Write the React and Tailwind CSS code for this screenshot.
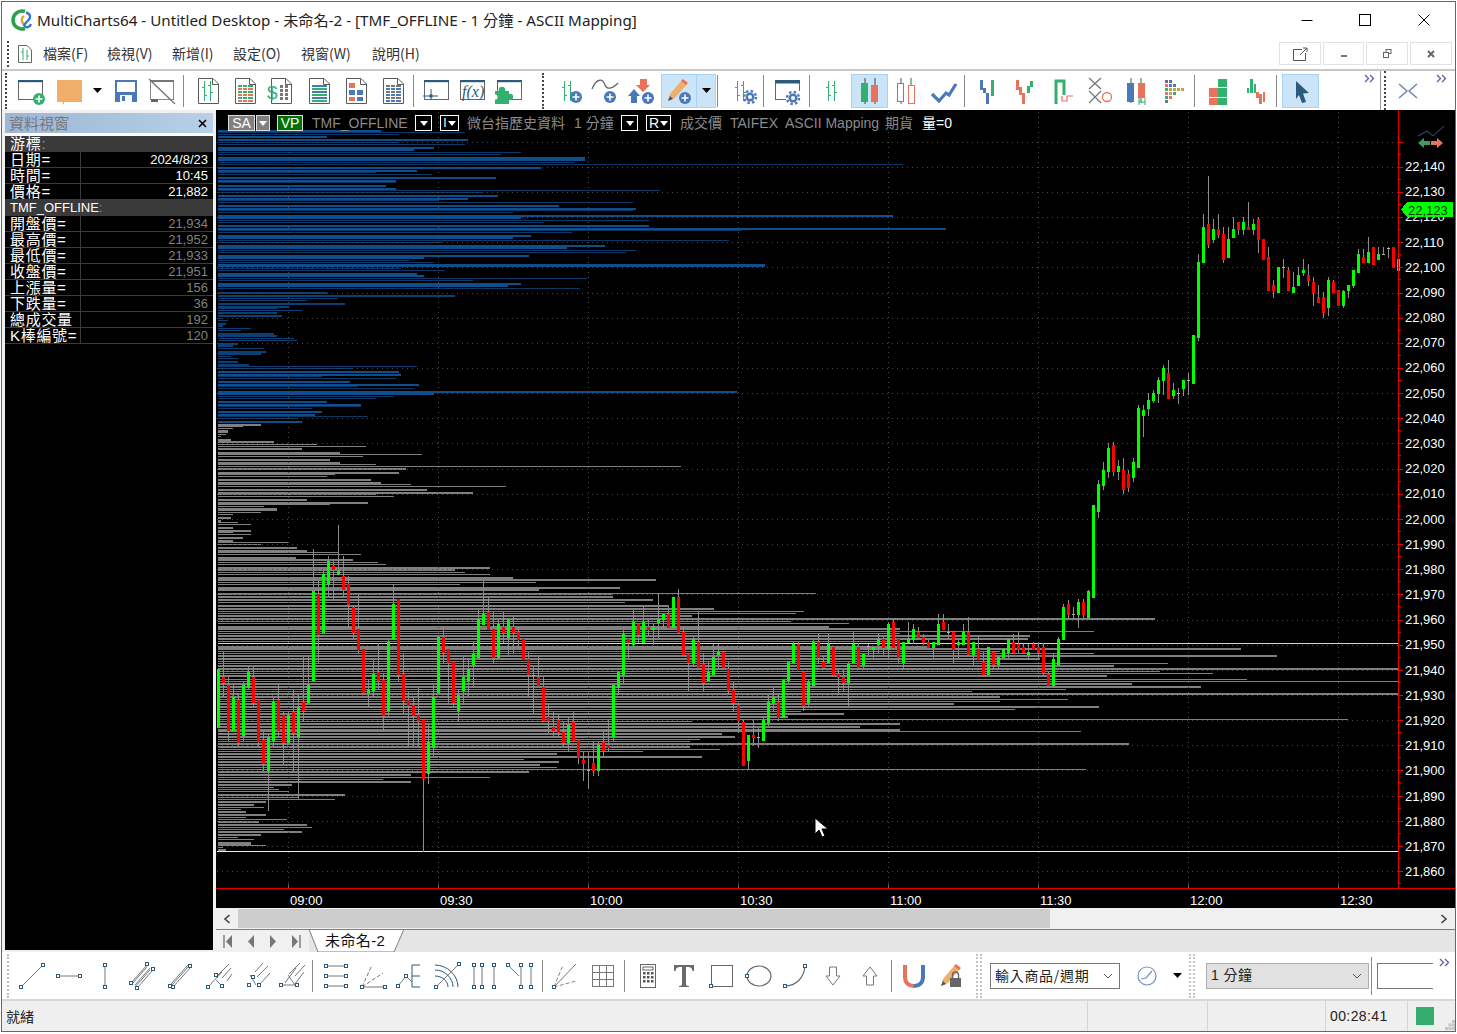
import React from "react";

// ---------- chart data (transcribed from the chart, [x, colour, bodyTop, bodyBottom, wickTop, wickBottom])
const groupA = [
  [7,"g",388,564,388,564],[22,"r",412,430,336,470],[37,"r",436,574,404,604],[52,"g",472,574,428,574],[67,"r",480,610,465,618],
  [82,"g",436,588,426,604],[97,"g",396,444,380,450],[112,"r",412,490,380,500],[127,"r",480,606,480,618],[142,"r",600,672,576,692],
  [157,"g",592,694,584,812],[172,"g",486,604,474,618],[187,"r",480,574,434,590],[202,"r",526,610,516,676],[217,"g",526,610,516,610],
  [232,"r",516,580,450,692],[247,"g",502,594,466,778],[262,"r",486,514,350,544],[277,"g",436,490,350,490],[292,"g",152,424,28,424],
  [307,"r",162,286,124,370],[322,"g",102,280,86,280],[337,"g",64,136,48,170],[352,"r",78,90,64,176],[367,"g",94,106,-45,106],
  [382,"r",108,150,48,174],[397,"r",132,196,108,264],[412,"r",202,280,198,298],[427,"r",268,330,162,338],[442,"r",328,460,328,460],
  [457,"g",450,460,420,502],[472,"g",402,454,360,470],[487,"r",396,424,310,450],[502,"r",420,528,400,574],[517,"g",306,514,300,528],
  [532,"g",192,300,132,300],[547,"r",178,406,178,424],[562,"r",402,484,342,520],[577,"r",480,498,456,618],[592,"r",496,528,470,618],
  [607,"r",526,544,444,618],[622,"r",540,718,540,935],[637,"g",606,702,556,732],[652,"g",472,624,436,648],[667,"g",292,460,292,460],
  [682,"r",292,340,262,370],[697,"r",328,370,328,490],[712,"r",366,490,366,502],[727,"g",466,514,450,542],[742,"g",412,454,350,490],
  [757,"g",388,424,356,468],[772,"g",342,376,306,440],[787,"g",238,354,208,354],[802,"g",222,256,124,256],[817,"r",216,270,170,270],
  [832,"r",268,354,216,370],[847,"g",252,354,236,354],[862,"r",262,280,216,310],[877,"g",238,294,238,346],[892,"r",262,280,232,340],
  [907,"r",276,300,262,328],[922,"r",298,360,298,360],[937,"r",358,406,336,470],[952,"d",405,405,380,520],[967,"r",412,438,350,438],
  [982,"r",442,544,412,544],[997,"r",532,544,488,580],[1012,"r",562,574,516,590],[1027,"r",540,580,526,592],[1042,"r",576,610,546,618],
  [1057,"g",556,610,534,634],[1072,"r",546,604,516,604],[1087,"r",600,654,600,672],[1102,"r",660,672,636,724],[1117,"d",690,690,636,748],
  [1132,"r",670,694,604,708],[1147,"g",616,694,606,708],[1162,"r",606,634,570,650],[1177,"r",616,624,540,634],
];
const groupB = [
  [10,"g",316,472,316,484],[25,"g",276,324,276,346],[40,"g",162,286,150,310],[55,"r",178,190,178,234],[70,"g",126,196,90,204],
  [85,"r",132,166,132,190],[100,"g",126,190,82,190],[115,"r",142,150,120,166],[130,"g",142,150,132,196],[145,"g",118,130,42,174],
  [160,"g",102,120,102,148],[175,"r",102,144,82,144],[190,"g",52,144,52,144],[205,"r",52,160,28,160],[220,"r",156,226,140,226],
  [235,"r",222,250,222,334],[250,"g",178,250,172,258],[265,"r",186,264,96,264],[280,"r",252,310,222,334],[295,"g",276,304,246,304],
  [310,"g",232,286,192,286],[325,"g",216,226,192,264],[340,"r",216,264,216,264],[355,"r",268,334,246,346],[370,"r",330,370,306,394],
  [385,"r",376,424,376,460],[400,"r",426,558,420,558],[415,"g",466,544,466,568],[430,"r",466,474,420,498],[445,"d",472,472,444,504],
  [460,"g",420,484,412,484],[475,"g",366,430,346,438],[490,"g",352,370,322,394],[505,"r",366,414,346,422],[520,"g",300,414,300,414],
  [535,"g",246,304,246,310],[550,"g",192,250,186,250],[565,"r",192,270,186,270],[580,"r",276,378,276,394],[595,"g",306,370,300,384],
  [610,"g",186,318,180,318],[625,"r",186,234,162,250],[640,"r",246,264,232,270],[655,"g",192,250,162,250],[670,"r",202,286,202,286],
  [685,"r",282,294,268,346],[700,"r",292,310,270,334],
];
const groupC = [
  [25,"g",222,280,216,348],[40,"g",162,220,126,220],[55,"r",172,234,160,234],[70,"g",192,226,192,238],[85,"d",168,168,162,196],
  [100,"g",171,180,171,204],[115,"g",148,166,132,192],[130,"r",148,174,142,196],[145,"g",102,180,96,208],[160,"r",96,174,88,174],
  [175,"r",148,204,148,220],[190,"g",156,220,156,238],[205,"g",148,160,96,160],[220,"g",118,150,102,162],[235,"r",126,144,112,144],
  [250,"r",142,160,132,166],[265,"r",156,174,150,174],[280,"g",156,174,156,204],[295,"g",102,166,72,166],[310,"r",96,120,72,120],
  [325,"d",126,126,102,144],[340,"r",126,180,126,220],[355,"g",156,166,150,204],[370,"g",126,166,102,166],[385,"r",126,196,82,196],
  [400,"g",156,196,156,226],[415,"r",178,210,142,210],[430,"r",216,256,186,256],[445,"g",172,256,172,256],[460,"r",186,226,186,234],
  [475,"g",202,226,202,238],[490,"g",178,204,178,204],[505,"g",148,190,148,204],[520,"r",156,190,132,190],[535,"r",162,180,126,190],
  [550,"r",172,190,162,190],[565,"g",186,196,162,210],[580,"r",162,180,156,180],[595,"r",172,190,156,204],[610,"r",172,250,160,256],
  [625,"r",252,288,246,288],[640,"g",208,288,192,294],[655,"g",148,226,142,226],[670,"g",52,150,42,150],[685,"r",42,76,30,88],
  [700,"d",73,73,52,90],[715,"g",36,76,26,114],[730,"r",36,76,28,88],[745,"g",3,84,0,84],
];
const groupD = [
  [1093.3,"g",505,598,505,598],[1098.3,"g",484,512,480,518],[1103.3,"g",470,486,462,490],[1108.3,"g",448,472,443,478],
  [1113.3,"r",445,472,442,476],[1118.3,"g",466,472,460,480],[1123.3,"r",470,490,458,494],[1128.3,"r",474,488,470,492],[1133.3,"g",462,478,458,482],
];
const groupE = [
  [265,"g",864,1044,856,1044],[280,"g",870,888,856,950],[295,"g",840,868,820,888],[310,"g",820,844,810,850],[325,"g",780,822,770,850],
  [340,"g",744,784,736,826],[355,"r",760,838,720,838],[370,"g",810,828,790,836],[385,"d",820,820,805,852],[400,"g",780,808,780,828],
  [415,"d",780,780,760,824],[430,"g",645,792,645,792],[445,"g",426,654,402,662],[460,"g",320,430,282,430],[475,"r",312,376,168,384],
  [490,"g",326,360,298,368],[505,"r",326,346,282,354],[520,"r",342,420,320,428],[535,"g",356,414,320,414],[550,"g",326,354,292,354],
  [565,"r",306,330,306,346],[580,"g",306,330,292,346],[595,"r",320,330,246,330],[610,"g",312,330,296,346],[625,"r",298,360,292,400],
  [640,"r",356,420,356,420],[655,"r",410,514,380,514],[670,"r",494,514,480,534],[685,"g",440,518,440,518],[700,"d",442,442,418,474],
  [715,"r",450,514,440,514],[730,"g",500,518,456,518],[745,"g",464,498,440,498],[760,"g",450,460,418,468],[775,"r",464,484,432,498],
  [790,"r",486,520,470,558],[805,"r",530,550,494,550],[820,"r",530,580,516,594],[835,"g",480,564,472,588],[850,"r",486,518,480,518],
  [865,"r",510,558,510,558],[880,"g",514,558,510,564],[895,"g",494,514,494,534],[910,"g",450,498,450,504],[925,"g",402,460,386,460],
  [940,"r",410,430,386,430],[955,"g",396,430,350,430],[970,"r",382,436,382,436],[985,"g",402,420,380,420],[1000,"d",402,402,380,404],
  [1015,"d",385,385,380,414],[1030,"r",382,444,382,444],[1045,"g",417,452,417,452],
];

const toScreen = (list, bx, by, s) =>
  list.map(([x, c, t, b, wt, wb]) => ({
    x: Math.floor(bx + x / s),
    c,
    t: Math.round(by + t / s),
    b: Math.round(by + b / s),
    wt: Math.round(by + wt / s),
    wb: Math.round(by + wb / s),
  }));

const candles = [
  ...toScreen(groupA, 216, 540, 3),
  ...toScreen(groupB, 610, 580, 3),
  ...toScreen(groupC, 840, 590, 3),
  ...toScreen(groupD, 0, 0, 1),
  ...toScreen(groupE, 1050, 120, 3),
];

// volume profile rows: [y, width] in zoom units plus height
const blueRows = [
  [3,495,2],[9,747,1],[15,549,1],[23,333,2],[32,756,2],[40,549,1],[46,747,1],[54,654,2],[62,594,2],[70,915,1],[76,855,1],[84,1107,2],[92,1107,2],[99,1074,1],
  [106,2061,1],[114,975,2],[123,603,2],[130,480,1],[136,648,1],[144,840,2],[153,540,2],[160,540,1],[168,510,2],[177,540,2],[184,1332,1],[190,800,1],[198,846,2],
  [207,756,2],[213,669,1],[220,1250,1],[228,1029,2],[237,1260,2],[244,1250,1],[250,891,1],[258,2031,2],[266,915,2],[274,1300,1],[280,984,1],[288,1300,2],
  [297,2190,2],[303,1578,1],[310,1068,1],[318,945,2],[326,891,2],[334,1540,1],[340,677,1],[348,1167,2],[356,1053,2],[364,1260,1],[370,1230,1],[378,939,2],
  [386,624,2],[394,579,1],[400,654,1],[409,1647,3],[418,555,1],[424,687,1],[432,603,2],[440,624,2],[448,1113,1],[454,771,1],[462,915,2],[470,876,2],[478,1092,1],
  [491,333,2],[500,717,2],[508,366,1],[514,273,1],[522,387,2],[531,219,2],[538,183,1],[544,258,1],[551,183,2],[560,198,2],[568,15,1],[574,36,1],[582,30,2],[590,21,2],
  [598,105,1],[604,75,1],[612,174,2],[620,183,2],[628,234,1],[634,243,1],[642,66,2],[650,51,2],[658,144,1],[666,150,2],[674,135,2],[682,45,1],[688,66,1],[696,66,2],
  [705,99,2],[712,603,1],[717,411,1],[726,549,2],[735,555,2],[742,318,1],[748,540,1],[756,402,2],[765,609,2],[772,426,1],[778,594,1],[786,1563,2],[794,654,2],
  [802,534,1],[808,480,1],[816,333,2],[825,435,2],[832,435,1],[838,288,1],[846,318,2],[855,297,2],[862,456,1],[868,243,1],[876,258,2],
];
const grayTop = [
  [0,135,2],[7,81,1],[13,51,1],[22,36,3],[31,30,1],[37,15,1],[45,45,2],[53,174,2],[61,303,1],[67,450,1],[74,258,2],[84,372,2],[91,618,1],[97,441,1],[105,342,2],
  [114,372,2],[121,480,1],[127,1395,1],[134,570,2],[144,549,2],[151,357,1],[157,333,1],[165,465,2],[174,495,2],[181,585,1],[187,870,1],[195,633,2],[204,771,2],
  [211,480,1],[217,534,1],[225,273,2],[234,456,2],[241,342,1],[247,144,1],[256,183,3],[265,135,1],[271,51,1],[279,45,2],[288,15,2],[295,66,1],[301,105,1],[309,51,2],
  [318,105,2],[325,51,1],[331,105,1],[339,81,2],[348,51,2],[355,219,1],[361,135,1],[369,243,2],
];
const grayMid = [
  [33,273,2],[40,366,1],[46,435,1],[54,240,2],[62,411,2],[70,486,1],[76,510,1],[84,822,2],[92,717,2],[99,747,1],[106,822,1],[114,891,2],[122,1320,2],[130,960,1],
  [136,732,1],[144,1212,2],[152,969,2],[161,1800,1],[166,1190,1],[172,1191,2],[183,1068,1],[190,1113,1],
];
// rows in screen px: [y, height, right edge]
const grayAbs = [
  [599,2,653],[602,1,625],[605,2,669],[608,2,714],[611,1,804],[613,1,796],[615,2,692],[618,2,1155],[621,1,791],[623,1,849],[626,2,829],[628,2,900],[631,1,1094],[633,1,900],
  [635,2,1030],[638,2,1028],[641,1,900],[646,2,930],[648,2,1241],[651,1,1000],[653,1,1094],[655,2,1277],[658,2,1040],[661,1,1000],[663,1,1168],[665,2,1114],[668,2,1398],
  [671,1,1160],[673,1,1213],[675,2,1107],[679,1,1247],[681,1,1398],[683,2,1132],[686,2,1201],[689,1,1066],[691,1,972],[693,2,1398],[696,2,1000],[699,1,1068],[701,1,1000],
  [703,2,954],[706,2,1099],[709,1,1015],[711,1,801],[713,2,844],[716,2,788],[719,1,1348],[721,1,692],[723,2,900],[726,2,860],[729,2,900],[731,1,1081],[733,2,722],[736,2,735],
  [739,1,700],[741,1,690],[743,2,1129],[746,2,690],[749,1,720],[751,1,643],[753,2,557],[756,2,702],[759,1,524],[761,2,559],[764,2,540],[767,1,557],[769,1,1086],
  [771,2,529],[774,2,411],[777,1,490],[779,1,383],[781,2,411],[784,2,292],[787,1,274],[789,1,279],[791,1,289],[794,2,345],[797,1,298],[799,1,335],[801,2,266],[804,2,254],
  [807,1,264],[809,1,241],[811,2,246],[814,2,266],[817,1,246],[819,1,287],[821,2,259],[824,2,307],[827,1,312],[829,1,284],[831,2,302],[834,2,261],[837,1,238],[839,1,254],
  [842,3,251],[845,1,266],[847,1,223],[849,2,226],
];

const prices = [];
for (let p = 22140; p >= 21860; p -= 10) prices.push(p);
const gridY = [141.7];
prices.forEach((_, i) => gridY.push(141.7 + 25.15 * (i + 1)));
const gridX = [288, 438, 588, 738, 888, 1038, 1188, 1338];
const times = ["09:00", "09:30", "10:00", "10:30", "11:00", "11:30", "12:00", "12:30"];

function Chart() {
  return (
    <svg width="1239" height="798" viewBox="216 110 1239 798" shapeRendering="crispEdges" className="block bg-black">
      {blueRows.map(([z, w, h], i) => (
        <rect key={i} x="218" y={Math.floor(130 + z / 3 - h / 2)} width={w / 3 - 2} height={h} fill={z > 480 && z < 720 ? "#0d3f73" : h > 1 ? "#104e8b" : "#0b3866"} />
      ))}
      {grayTop.map(([z, w, h], i) => (
        <rect key={i} x="218" y={Math.floor(425 + z / 3 - h / 2)} width={w / 3 - 2} height={h} fill="#808080" />
      ))}
      {grayMid.map(([z, w, h], i) => (
        <rect key={i} x="218" y={Math.floor(540 + z / 3 - h / 2)} width={w / 3 - 2} height={h} fill="#808080" />
      ))}
      {grayAbs.map(([y, h, x2], i) => (
        <rect key={i} x="218" y={y} width={x2 - 218} height={h} fill="#808080" />
      ))}
      <rect x="218" y="643" width="1180" height="1" fill="#f0c8c8" />
      <rect x="217" y="851" width="1181" height="1" fill="#f5f5b8" />

      {gridY.map((y) => (
        <line key={y} x1="217" x2="1398" y1={Math.round(y) + 0.5} y2={Math.round(y) + 0.5} stroke="#484848" strokeDasharray="1 4" />
      ))}
      {gridX.map((x) => (
        <line key={x} x1={x + 0.5} x2={x + 0.5} y1="112" y2="884" stroke="#484848" strokeDasharray="1 4" />
      ))}

      {candles.map((k, i) => (
        <rect key={i} x={k.x} y={k.wt} width="1" height={k.wb - k.wt} fill="#8c8c8c" />
      ))}
      {candles.map((k, i) =>
        k.c === "d" ? (
          <rect key={i} x={k.x - 1} y={k.t} width="3" height="1" fill="#b0b0b0" />
        ) : (
          <rect key={i} x={k.x - 1} y={k.t} width="3" height={k.b - k.t} fill={k.c === "g" ? "#00ff00" : "#ff0000"} />
        )
      )}

      {/* axis */}
      <rect x="1398" y="110" width="1" height="778" fill="#e60000" />
      <rect x="216" y="888" width="1239" height="1" fill="#e60000" />
      {gridY.map((y) => (
        <g key={y}>
          <rect x="1399" y={Math.round(y)} width="4" height="1" fill="#e60000" />
          <rect x="1399" y={Math.round(y) + 12} width="2" height="1" fill="#e60000" />
        </g>
      ))}
      {gridX.map((x) => (
        <rect key={x} x={x} y="884" width="1" height="4" fill="#666" />
      ))}
      <rect x="1398" y="884" width="1" height="4" fill="#e60000" />

      <g fontSize="13" fill="#ffffff" shapeRendering="auto">
        {prices.map((p, i) => (
          <text key={p} x="1405" y={171 + 25.18 * i}>{p.toLocaleString("en-US")}</text>
        ))}
        {times.map((t, i) => (
          <text key={t} x={gridX[i] + 2} y="905">{t}</text>
        ))}
      </g>

      {/* last price flag */}
      <polygon points="1401,209.5 1407,202 1453,202 1453,217 1407,217" fill="#00ff00" />
      <text x="1408" y="215" fontSize="13" fill="#0a3a0a" shapeRendering="auto">22,123</text>

      {/* top right trend badge */}
      <g shapeRendering="auto">
        <path d="M1418 136 L1427 131 L1433 136 L1444 126" fill="none" stroke="#3d5a80" strokeWidth="1" />
        <path d="M1418 143 L1424 138 L1424 141 L1430 141 L1430 145 L1424 145 L1424 148 Z" fill="#3c9d62" />
        <path d="M1443 143 L1437 138 L1437 141 L1431 141 L1431 145 L1437 145 L1437 148 Z" fill="#e8735a" />
      </g>

      {/* mouse pointer */}
      <path d="M815 818 L815 834 L819 830 L822 837 L825 836 L822 829 L828 829 Z" fill="#fff" stroke="#000" strokeWidth="1" shapeRendering="auto" />
    </svg>
  );
}

// ---------- icons
const NAVY = "#2b5a7a";
const GREEN = "#31b06e";
const SALMON = "#e8735a";
const BLUE = "#4a78b8";

function Ico({ children }) {
  return (
    <svg width="32" height="32" viewBox="0 0 32 32" className="shrink-0 overflow-visible">
      {children}
    </svg>
  );
}

const Plus = ({ cx = 24, cy = 24, r = 6, fill = GREEN }) => (
  <g>
    <circle cx={cx} cy={cy} r={r} fill={fill} />
    <path d={`M${cx - 3.5} ${cy}H${cx + 3.5}M${cx} ${cy - 3.5}V${cy + 3.5}`} stroke="#fff" strokeWidth="1.6" />
  </g>
);

const Gear = ({ cx = 22, cy = 23, r = 6 }) => (
  <g>
    <circle cx={cx} cy={cy} r={r - 1.5} fill={BLUE} />
    <circle cx={cx} cy={cy} r={r} fill="none" stroke={BLUE} strokeWidth="2.4" strokeDasharray="2.4 2.3" />
    <circle cx={cx} cy={cy} r="2" fill="#fff" />
  </g>
);

const Win = ({ color = "#666", top = NAVY }) => (
  <g fill="none">
    <rect x="3.5" y="5.5" width="24" height="19" stroke={color} />
    <rect x="3" y="5" width="25" height="2.2" fill={top} />
  </g>
);

const Doc = ({ children }) => (
  <g>
    <path d="M6.5 3.5H21L26.5 9V28.5H6.5Z" fill="#fff" stroke="#5a5a5a" />
    <path d="M20.5 3.5V9.5H26.5" fill="none" stroke="#5a5a5a" />
    {children}
  </g>
);

const MiniBars = ({ x = 10 }) => (
  <g fill={GREEN}>
    <rect x={x} y="6" width="1" height="20" />
    <rect x={x - 2} y="12" width="2" height="1" />
    <rect x={x + 1} y="20" width="2" height="1" />
    <rect x={x + 6} y="6" width="1" height="20" />
    <rect x={x + 4} y="10" width="2" height="1" />
    <rect x={x + 7} y="17" width="2" height="1" />
  </g>
);

const TableRows = ({ c1, c2 }) => (
  <g>
    {[10, 13, 16, 19, 22, 25].map((y, i) => (
      <g key={y}>
        <rect x="9" y={y} width="4" height="2" fill={i % 2 ? c2 : c1} />
        <rect x="14" y={y} width="4" height="2" fill={i % 2 ? c2 : c1} />
        <rect x="19" y={y} width="5" height="2" fill={i % 2 ? c2 : c1} />
      </g>
    ))}
  </g>
);

const Node = ({ x, y, c = NAVY }) => <rect x={x - 1.5} y={y - 1.5} width="3" height="3" fill="#fff" stroke={c} strokeWidth="1" />;
const L = ({ d, c = "#777", w = 1 }) => <path d={d} fill="none" stroke={c} strokeWidth={w} />;

const Pencil = ({ x = 0, y = 0 }) => (
  <g transform={`translate(${x} ${y})`}>
    <path d="M5 26 L7 19 L19 5 L24 9 L12 23 Z" fill="#efae6a" />
    <path d="M18 6 L20 4 L25 8 L23 10 Z" fill={SALMON} />
    <path d="M5 26 L7 21 L10 24 Z" fill="#555" />
  </g>
);

const Chevrons = () => (
  <svg width="11" height="9" viewBox="0 0 11 9" className="shrink-0">
    <path d="M1 1 L4.5 4.5 L1 8 M6 1 L9.5 4.5 L6 8" fill="none" stroke="#5c5ca8" strokeWidth="1.3" />
  </svg>
);

const DropArrow = () => (
  <svg width="9" height="5" viewBox="0 0 9 5" className="shrink-0"><path d="M0 0H9L4.5 5Z" fill="#000" /></svg>
);

const ComboArrow = () => (
  <svg width="10" height="6" viewBox="0 0 10 6" className="shrink-0"><path d="M1 1L5 5L9 1" fill="none" stroke="#555" /></svg>
);

function Slot({ c, on, children }) {
  return (
    <div className={`flex items-center justify-center shrink-0 ${c} ${on ? "h-[34px] bg-[#cce4f7] border border-[#a5d2f5]" : "h-full"}`}>
      {children}
    </div>
  );
}

const Sep = ({ c = "" }) => <div className={`w-px h-[32px] bg-[#8a8a8a] shrink-0 ${c}`} />;

function TitleBar() {
  return (
    <div className="flex items-center h-[36px] bg-white shrink-0">
      <svg width="22" height="22" viewBox="0 0 22 22" className="ml-[9px] shrink-0">
        <path d="M14 2.5 A9 9 0 1 0 14 19.5" fill="none" stroke="#2e9e4f" strokeWidth="3.6" />
        <path d="M13 7 A4.6 4.6 0 0 0 13 15" fill="none" stroke="#e8a020" strokeWidth="2.2" />
        <path d="M15 3.5 C20 5 20 9 17 11.5 L13 16 C15 20 19 18 20 15" fill="none" stroke="#3a78c8" strokeWidth="2.4" />
      </svg>
      <div className="ml-[4px] text-[15.2px] text-[#222] whitespace-nowrap [font-family:'Noto_Sans','Noto_Sans_CJK_TC',sans-serif]">
        MultiCharts64 - Untitled Desktop - 未命名-2 - [TMF_OFFLINE - 1 分鐘 - ASCII Mapping]
      </div>
      <div className="ml-auto flex items-center h-full">
        <svg width="12" height="12" viewBox="0 0 12 12" className="mr-[46px]"><path d="M0.5 6.5H11.5" stroke="#000" /></svg>
        <svg width="12" height="12" viewBox="0 0 12 12" className="mr-[47px]"><rect x="0.5" y="0.5" width="11" height="11" fill="none" stroke="#000" /></svg>
        <svg width="12" height="12" viewBox="0 0 12 12" className="mr-[25px]"><path d="M0.5 0.5L11.5 11.5M11.5 0.5L0.5 11.5" stroke="#000" /></svg>
      </div>
    </div>
  );
}

function MenuBar() {
  return (
    <div className="flex items-center h-[31px] bg-white shrink-0 pl-[5px]">
      <div className="w-0 h-[26px] border-l-2 border-dotted border-[#444] shrink-0" />
      <svg width="16" height="18" viewBox="0 0 16 18" className="ml-[8px] shrink-0">
        <path d="M1.5 .5H10L14.5 5V17.5H1.5Z" fill="#fff" stroke="#666" />
        <path d="M6 3V15M10 5V15" stroke={GREEN} />
        <path d="M4 7H6M10 11H12" stroke={GREEN} />
      </svg>
      <div className="flex ml-[10px] text-[14px] text-[#333] whitespace-nowrap [font-family:'Noto_Sans_CJK_TC',sans-serif]">
        <span className="w-[64px]">檔案(F)</span>
        <span className="w-[65px]">檢視(V)</span>
        <span className="w-[61px]">新增(I)</span>
        <span className="w-[68px]">設定(O)</span>
        <span className="w-[71px]">視窗(W)</span>
        <span className="w-[50px]">說明(H)</span>
      </div>
      <div className="ml-auto flex gap-[2px] pr-[3px]">
        <div className="w-[42px] h-[23px] border border-[#e2e2e2] flex items-center justify-center">
          <svg width="16" height="14" viewBox="0 0 16 14"><path d="M10 2.5H1.5V13.5H13.5V6" fill="none" stroke="#555" /><path d="M8 8L15 1M11 1H15V5" fill="none" stroke="#555" /></svg>
        </div>
        <div className="w-[41px] h-[23px] border border-[#e2e2e2] flex items-center justify-center">
          <div className="w-[6px] h-[2px] bg-[#777] mt-[5px]" />
        </div>
        <div className="w-[42px] h-[23px] border border-[#e2e2e2] flex items-center justify-center">
          <svg width="9" height="9" viewBox="0 0 9 9"><rect x="3" y="0.5" width="5" height="4" fill="#fff" stroke="#666" /><rect x="0.5" y="3.5" width="5" height="5" fill="#fff" stroke="#666" /></svg>
        </div>
        <div className="w-[42px] h-[23px] border border-[#e2e2e2] flex items-center justify-center">
          <svg width="8" height="8" viewBox="0 0 8 8"><path d="M1 1L7 7M7 1L1 7" stroke="#666" strokeWidth="2" /></svg>
        </div>
      </div>
    </div>
  );
}

function TopToolbar() {
  return (
    <div className="flex items-center h-[39px] bg-white shrink-0 pl-[3px]">
      <div className="w-0 h-[36px] border-l-2 border-dotted border-[#444] shrink-0" />
      <div className="w-[2px] shrink-0" />
      <Slot c="w-[44px]"><Ico><Win /><Plus /></Ico></Slot>
      <Slot c="w-[34px]"><Ico><path d="M3 5H28V27H10V30L8 27H3Z" fill="#efae6a" /></Ico></Slot>
      <Slot c="w-[20px]"><DropArrow /></Slot>
      <Slot c="w-[38px]"><Ico>
        <path d="M5 5H27V27H5Z" fill={BLUE} /><rect x="7" y="7" width="18" height="10" fill="#fff" /><rect x="10" y="20" width="12" height="7" fill="#fff" /><rect x="12" y="21" width="3" height="5" fill={BLUE} />
      </Ico></Slot>
      <Slot c="w-[34px]"><Ico>
        <rect x="4.5" y="5.5" width="23" height="19" fill="none" stroke="#888" /><rect x="4" y="5" width="24" height="2" fill="#777" />
        <path d="M3 4L29 29" stroke="#777" strokeWidth="1.4" /><path d="M5 24H12V27H5Z" fill="#666" />
      </Ico></Slot>
      <Slot c="w-[8px]"><Sep /></Slot>
      <Slot c="w-[42px]"><Ico><Doc><MiniBars x={12} /></Doc></Ico></Slot>
      <Slot c="w-[32px]"><Ico><Doc><TableRows c1={GREEN} c2={SALMON} /></Doc></Ico></Slot>
      <Slot c="w-[40px]"><Ico>
        <Doc><g fill="#777">{[10, 14, 18, 22].map((y) => <g key={y}><rect x="15" y={y} width="3" height="3" /><rect x="20" y={y} width="3" height="3" /></g>)}</g></Doc>
        <text x="2" y="24" fontSize="19" fill={GREEN} fontFamily="Liberation Sans">$</text>
      </Ico></Slot>
      <Slot c="w-[36px]"><Ico><Doc>{[10, 13, 16, 19, 22, 25].map((y, i) => <rect key={y} x="9" y={y} width="15" height="2" fill={i % 2 ? GREEN : BLUE} />)}</Doc></Ico></Slot>
      <Slot c="w-[38px]"><Ico><Doc>
        <rect x="9" y="8" width="6" height="5" fill={SALMON} /><rect x="9" y="15" width="6" height="5" fill={BLUE} /><rect x="17" y="15" width="6" height="5" fill={BLUE} />
        <rect x="9" y="22" width="6" height="4" fill={SALMON} /><rect x="17" y="22" width="6" height="4" fill={BLUE} />
      </Doc></Ico></Slot>
      <Slot c="w-[36px]"><Ico><Doc><TableRows c1="#777" c2={BLUE} /></Doc></Ico></Slot>
      <Slot c="w-[4px]"><Sep /></Slot>
      <Slot c="w-[44px]"><Ico><Win /><path d="M2 21H17M10 14V25" stroke={NAVY} /><rect x="8.5" y="19.5" width="3" height="3" fill={NAVY} /></Ico></Slot>
      <Slot c="w-[28px]"><Ico><Win /><text x="5" y="22" fontSize="16" fontStyle="italic" fill={NAVY} fontFamily="Liberation Serif">f(x)</text></Ico></Slot>
      <Slot c="w-[46px]"><Ico><Win />
        <g fill={GREEN}><rect x="1" y="16" width="14" height="13" /><circle cx="8" cy="15" r="3.2" /><circle cx="16" cy="22" r="3.2" /></g>
        <circle cx="1" cy="22" r="2.6" fill="#fff" />
      </Ico></Slot>
      <Slot c="w-[20px]"><div className="w-0 h-[36px] border-l-2 border-dotted border-[#444] -ml-[1px]" /></Slot>
      <Slot c="w-[34px]"><Ico><MiniBars x={10} /><Plus fill={BLUE} cx={22} cy={22} /></Ico></Slot>
      <Slot c="w-[36px]"><Ico><path d="M3 14 C8 2 14 4 16 10 C18 15 23 14 29 8" fill="none" stroke="#666" strokeWidth="1.3" /><Plus fill={BLUE} cx={21} cy={22} /></Ico></Slot>
      <Slot c="w-[36px]"><Ico><path d="M15 4H22V10H25L18 17L11 10H15Z" fill={SALMON} /><path d="M9 14L15 21H12V28H6V21H3Z" fill={BLUE} /><Plus fill={BLUE} cx={23} cy={23} /></Ico></Slot>
      <div className="w-[2px] shrink-0" />
      <Slot c="w-[36px]" on><Ico><Pencil /><Plus fill={BLUE} cx={22} cy={23} /></Ico></Slot>
      <Slot c="w-[20px] -ml-px" on><DropArrow /></Slot>
      <Slot c="w-[11px] justify-end"><Sep c="mr-[9px]" /></Slot>
      <Slot c="w-[36px]"><Ico><MiniBars x={8} /><Gear cx={21} cy={22} /></Ico></Slot>
      <Slot c="w-[4px] justify-start"><Sep /></Slot>
      <Slot c="w-[42px]"><Ico><Win /><rect x="3" y="5" width="25" height="3.5" fill={NAVY} /><rect x="14" y="16" width="15" height="14" fill="#fff" /><Gear cx={21} cy={23} /></Ico></Slot>
      <Slot c="w-[4px] justify-start"><Sep /></Slot>
      <Slot c="w-[36px]"><Ico><MiniBars x={13} /></Ico></Slot>
      <div className="w-[2px] shrink-0" />
      <Slot c="w-[37px]" on><Ico>
        <path d="M11 3V29M21 3V29" stroke="#444" /><rect x="7" y="8" width="7" height="19" fill={GREEN} /><rect x="17" y="10" width="7" height="17" fill={SALMON} />
      </Ico></Slot>
      <Slot c="w-[36px]"><Ico>
        <path d="M11 3V29M21 3V29" stroke="#555" /><rect x="7.5" y="8.5" width="6" height="18" fill="#fff" stroke={GREEN} /><rect x="18.5" y="10.5" width="6" height="18" fill="#fff" stroke={SALMON} />
      </Ico></Slot>
      <Slot c="w-[40px]"><Ico><path d="M4 19 L11 26 L18 18 L21 20 L28 9" fill="none" stroke={BLUE} strokeWidth="3.2" /></Ico></Slot>
      <Slot c="w-[4px] justify-start"><Sep /></Slot>
      <Slot c="w-[40px]"><Ico>
        <rect x="8" y="5" width="3" height="10" fill={BLUE} /><rect x="11" y="13" width="3" height="5" fill={BLUE} /><rect x="14" y="18" width="3" height="11" fill={BLUE} /><rect x="19" y="5" width="3" height="16" fill={GREEN} />
      </Ico></Slot>
      <Slot c="w-[32px]"><Ico>
        <rect x="8" y="5" width="3" height="10" fill={SALMON} /><rect x="11" y="12" width="3" height="8" fill={SALMON} /><rect x="14" y="18" width="3" height="11" fill={SALMON} /><rect x="19" y="11" width="3" height="7" fill={GREEN} /><rect x="22" y="6" width="3" height="6" fill={GREEN} />
      </Ico></Slot>
      <Slot c="w-[48px]"><Ico>
        <path d="M8 29V6H16V20" fill="none" stroke={GREEN} strokeWidth="3" /><path d="M14 21V26H19V21H25" fill="none" stroke={SALMON} strokeWidth="1.2" />
      </Ico></Slot>
      <Slot c="w-[24px]"><Ico>
        <path d="M5 3L17 14M17 3L5 14M5 16L17 28M17 16L5 28" stroke="#777" strokeWidth="1.3" /><circle cx="23" cy="22" r="4.5" fill="none" stroke={SALMON} strokeWidth="1.3" />
      </Ico></Slot>
      <Slot c="w-[48px]"><Ico>
        <path d="M11 3V28M21 3V28" stroke="#555" /><rect x="7" y="8" width="7" height="19" fill={BLUE} /><rect x="18" y="8" width="7" height="15" fill={SALMON} />
        <path d="M19 23V30M25 23V30M19 27H25" stroke={GREEN} />
      </Ico></Slot>
      <Slot c="w-[26px]"><Ico>
        {[
          [8, 5, "#6a6a9a"], [12, 5, "#6a6a9a"], [8, 9, SALMON], [12, 9, BLUE], [16, 9, BLUE], [8, 13, GREEN], [12, 13, "#c9a050"], [16, 13, "#c9a050"], [20, 13, "#c9a050"], [24, 13, "#c9a050"],
          [8, 17, SALMON], [12, 17, "#c9a050"], [16, 17, GREEN], [8, 21, GREEN], [12, 21, SALMON], [8, 25, "#777"],
        ].map(([x, y, f], i) => <rect key={i} x={x} y={y} width="3" height="3" fill={f} />)}
      </Ico></Slot>
      <Slot c="w-[16px]"><Sep /></Slot>
      <Slot c="w-[30px]"><Ico>
        <rect x="17" y="4" width="9" height="8" fill={GREEN} /><rect x="8" y="13" width="9" height="9" fill={SALMON} /><rect x="17" y="13" width="9" height="9" fill={GREEN} /><rect x="8" y="23" width="9" height="7" fill={SALMON} /><rect x="17" y="23" width="9" height="7" fill={GREEN} />
      </Ico></Slot>
      <Slot c="w-[44px]"><Ico>
        <rect x="9" y="13" width="2" height="5" fill={GREEN} /><rect x="12" y="4" width="3" height="14" fill={GREEN} /><rect x="16" y="9" width="2" height="9" fill={GREEN} />
        <rect x="18" y="17" width="3" height="6" fill={SALMON} /><rect x="21" y="19" width="3" height="10" fill={SALMON} /><rect x="25" y="17" width="2" height="10" fill={SALMON} />
      </Ico></Slot>
      <Slot c="w-[4px] justify-start"><Sep /></Slot>
      <div className="w-[2px] shrink-0" />
      <Slot c="w-[37px]" on><Ico><path d="M11 6L24 18L18 18.5L21 27L17 28L14 20L11 24Z" fill={NAVY} /></Ico></Slot>
      <div className="self-start mt-[3px] ml-[45px] shrink-0"><Chevrons /></div>
      <div className="w-px h-[39px] bg-[#999] ml-[5px] shrink-0" />
      <div className="w-0 h-[39px] border-l-2 border-dotted border-[#444] ml-[3px] shrink-0" />
      <Slot c="w-[44px]"><svg width="20" height="16" viewBox="0 0 20 16"><path d="M1 1L9 8L1 15M19 1L11 8L19 15" fill="none" stroke="#6c7fa8" strokeWidth="1.4" /></svg></Slot>
      <div className="self-start mt-[3px] ml-[6px] shrink-0"><Chevrons /></div>
    </div>
  );
}

const rows1 = [["日期=", "2024/8/23"], ["時間=", "10:45"], ["價格=", "21,882"]];
const rows2 = [["開盤價=", "21,934"], ["最高價=", "21,952"], ["最低價=", "21,933"], ["收盤價=", "21,951"], ["上漲量=", "156"], ["下跌量=", "36"], ["總成交量", "192"], ["K棒編號=", "120"]];

function DataRow({ label, value, dim }) {
  return (
    <div className="flex h-[16px] border-b border-[#3a3a3a] shrink-0 overflow-hidden">
      <div className="w-[75px] pl-[5px] text-[15px] leading-[15px] tracking-[0.7px] text-white whitespace-nowrap overflow-hidden shrink-0 [font-family:'Liberation_Sans','Noto_Sans_CJK_TC',sans-serif]">{label}</div>
      <div className={`flex-1 border-l border-[#3a3a3a] text-right pr-[5px] text-[13px] leading-[15px] ${dim ? "text-[#808080]" : "text-white"}`}>{value}</div>
    </div>
  );
}

function DataWindow() {
  return (
    <div className="w-[214px] shrink-0 h-full bg-[#f0f0f0] pl-[3px] pr-[3px] pt-[3px] pb-[2px] flex flex-col">
      <div className="h-[20px] flex items-center justify-between px-[4px] shrink-0 bg-gradient-to-r from-[#9cb6d4] to-[#b8d0e8]">
        <span className="text-[15px] text-[#777] [font-family:'Noto_Sans_CJK_TC',sans-serif]">資料視窗</span>
        <svg width="9" height="9" viewBox="0 0 9 9" className="mr-[2px] mt-[1px]"><path d="M1 1L8 8M8 1L1 8" stroke="#000" strokeWidth="1.6" /></svg>
      </div>
      <div className="h-[3px] bg-[#fbfbfb] shrink-0" />
      <div className="flex-1 bg-black flex flex-col min-h-0">
        <div className="h-[16px] bg-[#3a3a3a] pl-[5px] text-[15px] leading-[15px] tracking-[0.7px] text-white shrink-0 [font-family:'Liberation_Sans','Noto_Sans_CJK_TC',sans-serif]">游標<span className="text-[#999]">:</span></div>
        {rows1.map(([l, v]) => <DataRow key={l} label={l} value={v} />)}
        <div className="h-[16px] bg-[#3a3a3a] pl-[5px] text-[13px] leading-[16px] text-white shrink-0">TMF_OFFLINE<span className="text-[#999]">:</span></div>
        {rows2.map(([l, v]) => <DataRow key={l} label={l} value={v} dim />)}
      </div>
    </div>
  );
}

function HeaderBox({ c, children }) {
  return <div className={`h-[16px] border border-white text-white flex items-center justify-center shrink-0 text-[14px] leading-none ${c}`}>{children}</div>;
}

const WhiteDown = () => <svg width="8" height="5" viewBox="0 0 8 5"><path d="M0 0H8L4 5Z" fill="#fff" /></svg>;

function ChartHeader() {
  return (
    <div className="absolute left-[12px] top-[5px] h-[16px] flex items-center text-[14px] text-[#8a8a8a] whitespace-nowrap [font-family:'Liberation_Sans','Noto_Sans_CJK_TC',sans-serif]">
      <div className="w-[27px] h-[16px] bg-[#808080] border border-[#ddd] text-white flex items-center justify-center shrink-0">SA</div>
      <div className="w-[14px] h-[16px] ml-px bg-[#808080] border border-[#ddd] flex items-center justify-center shrink-0"><WhiteDown /></div>
      <div className="w-[26px] h-[16px] ml-[7px] bg-[#007000] border border-[#ddd] text-white flex items-center justify-center shrink-0">VP</div>
      <span className="ml-[9px] w-[94px] shrink-0">TMF_OFFLINE</span>
      <HeaderBox c="ml-[9px] w-[17px]"><WhiteDown /></HeaderBox>
      <HeaderBox c="ml-[8px] w-[19px]"><span className="text-[12px] mr-px">I</span><WhiteDown /></HeaderBox>
      <span className="ml-[8px] w-[107px] shrink-0">微台指歷史資料</span>
      <span className="w-[47px] shrink-0">1 分鐘</span>
      <HeaderBox c="w-[17px]"><WhiteDown /></HeaderBox>
      <HeaderBox c="ml-[8px] w-[25px]"><span className="mr-px">R</span><WhiteDown /></HeaderBox>
      <span className="ml-[9px] w-[50px] shrink-0">成交價</span>
      <span className="w-[55px] shrink-0">TAIFEX</span>
      <span className="w-[100px] shrink-0">ASCII Mapping</span>
      <span className="w-[37px] shrink-0">期貨</span>
      <span className="shrink-0 text-white">量=0</span>
    </div>
  );
}

function ScrollBar() {
  return (
    <div className="h-[21px] flex items-center bg-[#f0f0f0] shrink-0">
      <div className="w-[22px] flex justify-center shrink-0">
        <svg width="8" height="10" viewBox="0 0 8 10"><path d="M6.5 1L2 5L6.5 9" fill="none" stroke="#444" strokeWidth="1.6" /></svg>
      </div>
      <div className="w-[812px] h-[19px] bg-[#cdcdcd] shrink-0" />
      <div className="flex-1" />
      <div className="w-[22px] flex justify-center shrink-0">
        <svg width="8" height="10" viewBox="0 0 8 10"><path d="M1.5 1L6 5L1.5 9" fill="none" stroke="#444" strokeWidth="1.6" /></svg>
      </div>
    </div>
  );
}

function TabRow() {
  return (
    <div className="h-[23px] flex bg-[#e5e5e5] border-t border-[#808080] shrink-0">
      <div className="w-[93px] flex items-center bg-[#f0f0f0] pl-[7px] gap-[14px] shrink-0">
        <svg width="10" height="13" viewBox="0 0 10 13"><path d="M1 0V13" stroke="#777" strokeWidth="1.4" /><path d="M9 0V13L3 6.5Z" fill="#777" /></svg>
        <svg width="8" height="13" viewBox="0 0 8 13"><path d="M7 0V13L1 6.5Z" fill="#777" /></svg>
        <svg width="8" height="13" viewBox="0 0 8 13"><path d="M1 0V13L7 6.5Z" fill="#777" /></svg>
        <svg width="10" height="13" viewBox="0 0 10 13"><path d="M9 0V13" stroke="#777" strokeWidth="1.4" /><path d="M1 0V13L7 6.5Z" fill="#777" /></svg>
      </div>
      <div className="relative w-[96px] shrink-0 flex items-center pl-[16px]">
        <svg width="96" height="22" viewBox="0 0 96 22" className="absolute inset-0">
          <path d="M0 -1 L9 22 H85 L95 -1Z" fill="#fff" stroke="#808080" />
        </svg>
        <span className="relative text-[15px] tracking-[0.4px] text-[#111] whitespace-nowrap [font-family:'Liberation_Sans','Noto_Sans_CJK_TC',sans-serif]">未命名-2</span>
      </div>
    </div>
  );
}

function BottomToolbar() {
  return (
    <div className="flex items-center h-[47px] bg-white shrink-0 pl-[5px]">
      <div className="w-0 h-[44px] border-l-2 border-dotted border-[#bbb] shrink-0" />
      <div className="w-[1px] shrink-0" />
      <Slot c="w-[44px]"><Ico><L d="M5 27L27 5" /><Node x={5} y={27} /><Node x={27} y={5} /></Ico></Slot>
      <Slot c="w-[30px]"><Ico><L d="M5 16H27" /><Node x={5} y={16} /><Node x={27} y={16} /></Ico></Slot>
      <Slot c="w-[42px]"><Ico><L d="M16 5V27" /><Node x={16} y={5} /><Node x={16} y={27} /></Ico></Slot>
      <Slot c="w-[34px]"><Ico>
        <L d="M5 22L20 5M8 25L23 8M11 27L26 10M5 24L20 7M8 27L23 10" /><Node x={4} y={23} /><Node x={10} y={28} /><Node x={20} y={4} /><Node x={26} y={9} />
      </Ico></Slot>
      <Slot c="w-[40px]"><Ico><L d="M6 25L24 5M9 27L27 7M7 26L25 6" /><Node x={6} y={26} /><Node x={26} y={6} /><Node x={9} y={27} /></Ico></Slot>
      <Slot c="w-[40px]"><Ico><L d="M4 27L18 12M13 16L25 4M18 18L27 8M23 21L28 14M12 20L18 26M10 14L14 18" /><Node x={4} y={27} /><Node x={12} y={15} /><Node x={18} y={26} /></Ico></Slot>
      <Slot c="w-[34px]"><Ico><L d="M9 15L15 25M14 12L22 3M16 17L27 6M19 24L29 13" /><Node x={8} y={25} /><Node x={12} y={17} /><Node x={18} y={25} /></Ico></Slot>
      <Slot c="w-[38px]"><Ico><L d="M4 25H20M8 23L19 8M12 14L23 3M18 16L28 5M18 24L27 12M11 15L18 25" /><Node x={4} y={25} /><Node x={20} y={25} /></Ico></Slot>
      <Sep />
      <Slot c="w-[46px]"><Ico><L d="M6 6H26M6 16H26M6 26H26" /><Node x={6} y={6} /><Node x={26} y={6} /><Node x={6} y={16} /><Node x={26} y={16} /><Node x={6} y={26} /><Node x={26} y={26} /></Ico></Slot>
      <Slot c="w-[30px]"><Ico><L d="M4 27H27" /><path d="M4 27L14 5M4 27L25 13" fill="none" stroke="#777" strokeDasharray="4 2" /><Node x={4} y={27} /><Node x={27} y={27} /></Ico></Slot>
      <Slot c="w-[42px]"><Ico><L d="M4 26L12 16L18 22" /><L d="M18 5H26M18 5V27H26M18 16H26" c={NAVY} /><Node x={4} y={26} /><Node x={12} y={16} /></Ico></Slot>
      <Slot c="w-[32px]"><Ico><L d="M5 27L28 4" /><L d="M4 10C14 10 22 18 22 27M4 16C11 16 17 21 17 27M4 5C16 5 27 15 27 27" c={NAVY} /><Node x={5} y={27} /><Node x={28} y={4} /></Ico></Slot>
      <Slot c="w-[42px]"><Ico><L d="M6 5V27M14 5V27M26 5V27" /><Node x={6} y={5} /><Node x={6} y={27} /><Node x={14} y={5} /><Node x={14} y={27} /><Node x={26} y={5} /><Node x={26} y={27} /></Ico></Slot>
      <Slot c="w-[30px]"><Ico><L d="M4 5L15 16M17 5V27M27 5V27" /><Node x={4} y={5} /><Node x={17} y={5} /><Node x={17} y={27} /><Node x={27} y={5} /><Node x={27} y={27} /></Ico></Slot>
      <div className="w-[7px] shrink-0" />
      <Sep />
      <Slot c="w-[44px]"><Ico><L d="M5 27L27 4" /><path d="M5 27L14 5M5 27L27 21" fill="none" stroke="#888" strokeDasharray="4 2" /><Node x={5} y={27} /></Ico></Slot>
      <Slot c="w-[32px]"><Ico><rect x="5.5" y="5.5" width="21" height="21" fill="none" stroke="#777" /><L d="M12.5 5.5V26.5M19.5 5.5V26.5M5.5 12.5H26.5M5.5 19.5H26.5" /></Ico></Slot>
      <div className="w-[5px] shrink-0" />
      <Sep />
      <div className="w-[2px] shrink-0" />
      <Slot c="w-[42px]"><Ico>
        <rect x="8.5" y="4.5" width="15" height="23" fill="none" stroke="#666" /><rect x="11" y="7" width="10" height="3" fill="none" stroke="#666" />
        {[12, 16, 20].map((y) => <g key={y} fill="#555"><rect x="11" y={y} width="2.5" height="2.5" /><rect x="15" y={y} width="2.5" height="2.5" /><rect x="19" y={y} width="2.5" height="2.5" /></g>)}
      </Ico></Slot>
      <Slot c="w-[30px]"><Ico><path d="M6 5H26V11H24.5C24 8 23 7 20 7H18V24C18 25.5 19 26 21 26V27H11V26C13 26 14 25.5 14 24V7H12C9 7 8 8 7.5 11H6Z" fill="#6a6a6a" /></Ico></Slot>
      <Slot c="w-[46px]"><Ico><rect x="5.5" y="5.5" width="21" height="21" fill="none" stroke="#666" /><Node x={5} y={26} /></Ico></Slot>
      <Slot c="w-[28px]"><Ico><ellipse cx="16" cy="16" rx="12" ry="10" fill="none" stroke="#666" strokeWidth="1.2" /><Node x={4} y={16} /></Ico></Slot>
      <Slot c="w-[44px]"><Ico><L d="M6 26C17 26 25 18 26 6" c="#666" w={1.2} /><Node x={6} y={26} /><Node x={26} y={6} /></Ico></Slot>
      <Slot c="w-[32px]"><Ico><path d="M12.5 7H19.5V16H23L16 25L9 16H12.5Z" fill="#fff" stroke="#777" /></Ico></Slot>
      <Slot c="w-[42px]"><Ico><path d="M12.5 25H19.5V16H23L16 7L9 16H12.5Z" fill="#fff" stroke="#777" /></Ico></Slot>
      <Sep />
      <Slot c="w-[44px]"><Ico>
        <path d="M7 5V17C7 23 11 26 16 26" fill="none" stroke={SALMON} strokeWidth="4" /><path d="M25 5V17C25 23 21 26 16 26" fill="none" stroke={BLUE} strokeWidth="4" />
      </Ico></Slot>
      <Slot c="w-[32px]"><Ico><Pencil /><rect x="14" y="18" width="11" height="9" fill="#666" /><path d="M16.5 18V15A3 3 0 0 1 22.5 15V18" fill="none" stroke="#666" strokeWidth="1.4" /></Ico></Slot>
      <div className="w-[22px] flex justify-center shrink-0"><div className="w-[6px] h-[44px] border-x-2 border-dotted border-[#c4c4c4]" /></div>
      <div className="w-[130px] h-[26px] border border-[#777] flex items-center justify-between pl-[4px] pr-[6px] text-[14px] tracking-[0.7px] text-[#222] shrink-0 [font-family:'Noto_Sans_CJK_TC',sans-serif]">
        <span className="whitespace-nowrap">輸入商品/週期</span>
        <ComboArrow />
      </div>
      <Slot c="w-[53px]"><svg width="22" height="22" viewBox="0 0 22 22"><circle cx="11" cy="11" r="9" fill="none" stroke="#6f94c4" strokeWidth="1.2" /><path d="M5 14L10 13L16 6" fill="none" stroke="#6f94c4" strokeWidth="1.2" /></svg></Slot>
      <Slot c="w-[8px]"><DropArrow /></Slot>
      <div className="w-[25px] flex justify-center shrink-0 pr-[4px]"><div className="w-[6px] h-[44px] border-x-2 border-dotted border-[#c4c4c4]" /></div>
      <div className="w-[163px] h-[26px] bg-[#e1e1e1] border border-[#adadad] flex items-center justify-between pl-[4px] pr-[6px] text-[14px] tracking-[0.4px] text-[#222] shrink-0 [font-family:'Liberation_Sans','Noto_Sans_CJK_TC',sans-serif]">
        <span className="whitespace-nowrap">1 分鐘</span>
        <ComboArrow />
      </div>
      <Sep c="ml-[2px] h-[38px]" />
      <div className="w-[56px] h-[26px] ml-[5px] border border-r-0 border-[#777] shrink-0" />
      <div className="self-start mt-[6px] ml-[6px] shrink-0"><Chevrons /></div>
    </div>
  );
}

function StatusBar() {
  return (
    <div className="h-[30px] flex items-center bg-[#efefef] text-[14px] text-[#222] shrink-0">
      <div className="w-[1085px] pl-[4px] shrink-0 [font-family:'Noto_Sans_CJK_TC',sans-serif]">就緒</div>
      <div className="w-[120px] h-full border-l border-[#d4d4d4] shrink-0" />
      <div className="w-[118px] h-full border-l border-[#d4d4d4] shrink-0" />
      <div className="w-[82px] h-full border-l border-[#d4d4d4] flex items-center pl-[4px] tracking-[0.4px] shrink-0">00:28:41</div>
      <div className="flex-1 h-full border-l border-[#d4d4d4] flex items-center pl-[8px]">
        <div className="w-[18px] h-[18px] bg-[#35ad6c]" />
        <svg width="10" height="10" viewBox="0 0 10 10" className="self-end ml-[11px] mb-px">
          <g fill="#c4c4c4"><rect x="7" y="0" width="3" height="3" /><rect x="3.5" y="3.5" width="3" height="3" /><rect x="7" y="3.5" width="3" height="3" /><rect x="0" y="7" width="3" height="3" /><rect x="3.5" y="7" width="3" height="3" /><rect x="7" y="7" width="3" height="3" /></g>
        </svg>
      </div>
    </div>
  );
}

export default function App() {
  return (
    <div className="w-[1457px] h-[1034px] bg-white pt-px pl-px overflow-hidden [font-family:'Liberation_Sans','Noto_Sans_CJK_TC',sans-serif]">
      <div className="w-[1455px] h-[1031px] border border-[#666] flex flex-col box-border">
        <TitleBar />
        <MenuBar />
        <div className="h-[2px] bg-[#c8c8c8] shrink-0" />
        <TopToolbar />
        <div className="flex h-[842px] shrink-0">
          <DataWindow />
          <div className="flex-1 min-w-0 flex flex-col">
            <div className="relative h-[798px] shrink-0 overflow-hidden">
              <Chart />
              <ChartHeader />
            </div>
            <ScrollBar />
            <TabRow />
          </div>
        </div>
        <BottomToolbar />
        <div className="h-[2px] bg-[#d8d8d8] shrink-0" />
        <StatusBar />
      </div>
    </div>
  );
}
